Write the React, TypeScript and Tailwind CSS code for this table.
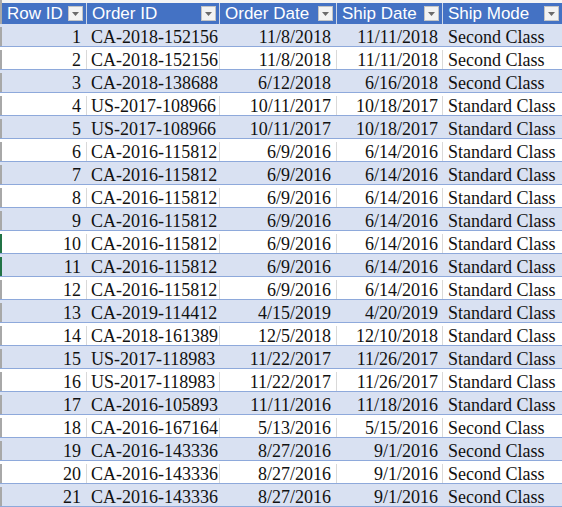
import React from "react";

type Row = [number, string, string, string, string];

const rows: Row[] = [
  [1, "CA-2018-152156", "11/8/2018", "11/11/2018", "Second Class"],
  [2, "CA-2018-152156", "11/8/2018", "11/11/2018", "Second Class"],
  [3, "CA-2018-138688", "6/12/2018", "6/16/2018", "Second Class"],
  [4, "US-2017-108966", "10/11/2017", "10/18/2017", "Standard Class"],
  [5, "US-2017-108966", "10/11/2017", "10/18/2017", "Standard Class"],
  [6, "CA-2016-115812", "6/9/2016", "6/14/2016", "Standard Class"],
  [7, "CA-2016-115812", "6/9/2016", "6/14/2016", "Standard Class"],
  [8, "CA-2016-115812", "6/9/2016", "6/14/2016", "Standard Class"],
  [9, "CA-2016-115812", "6/9/2016", "6/14/2016", "Standard Class"],
  [10, "CA-2016-115812", "6/9/2016", "6/14/2016", "Standard Class"],
  [11, "CA-2016-115812", "6/9/2016", "6/14/2016", "Standard Class"],
  [12, "CA-2016-115812", "6/9/2016", "6/14/2016", "Standard Class"],
  [13, "CA-2019-114412", "4/15/2019", "4/20/2019", "Standard Class"],
  [14, "CA-2018-161389", "12/5/2018", "12/10/2018", "Standard Class"],
  [15, "US-2017-118983", "11/22/2017", "11/26/2017", "Standard Class"],
  [16, "US-2017-118983", "11/22/2017", "11/26/2017", "Standard Class"],
  [17, "CA-2016-105893", "11/11/2016", "11/18/2016", "Standard Class"],
  [18, "CA-2016-167164", "5/13/2016", "5/15/2016", "Second Class"],
  [19, "CA-2016-143336", "8/27/2016", "9/1/2016", "Second Class"],
  [20, "CA-2016-143336", "8/27/2016", "9/1/2016", "Second Class"],
  [21, "CA-2016-143336", "8/27/2016", "9/1/2016", "Second Class"],
];

const headers = ["Row ID", "Order ID", "Order Date", "Ship Date", "Ship Mode"];

function Dropdown() {
  return (
    <div className="w-[15px] h-[15px] shrink-0 bg-[#f3f3f3] border border-[#c4c4c4] flex items-center justify-center">
      <svg width="7" height="4" viewBox="0 0 7 4">
        <polygon points="0,0 7,0 3.5,4" fill="#6b6b6b" />
      </svg>
    </div>
  );
}

export default function App() {
  return (
    <div className="w-[562px] h-[507px] overflow-hidden bg-white">
      <div className="h-[3px] bg-[#f4f4f4] border-l-2 border-[#a8a8a8]" />
      <div className="grid grid-cols-[87px_133px_117px_106px_119px] h-[21px] font-['Liberation_Sans']">
        {headers.map((h, i) => (
          <div
            key={h}
            className={`flex items-center justify-between bg-[#4472c4] text-white pl-[5px] pr-[3px] text-[17px] leading-none border-r border-[#d0d8e8] ${
              i === 0 ? "border-l-2 border-l-[#a8a8a8]" : ""
            } ${i === 4 ? "pr-[2px] border-r-0" : ""}`}
          >
            <span className="whitespace-nowrap">{h}</span>
            <Dropdown />
          </div>
        ))}
      </div>
      <div className="font-['Liberation_Serif']">
        {rows.map((r, idx) => {
          const band = idx % 2 === 0;
          const bg = band ? "bg-[#d9e1f2]" : "bg-white";
          const vline = band ? "border-r-[#d9e1f2]" : "border-r-[#d9d9d9]";
          const green = r[0] === 10 || r[0] === 11;
          return (
            <div
              key={r[0]}
              className={`grid grid-cols-[87px_133px_117px_106px_119px] h-[23px] pt-[3px] border-b border-[#8ea9db] text-[18px] leading-none text-[#111] ${bg}`}
            >
              <div
                className={`flex items-center justify-end pr-[5px] border-r ${vline} border-l-2 ${
                  green ? "border-l-[#217346]" : "border-l-[#a8a8a8]"
                }`}
              >
                {r[0]}
              </div>
              <div className={`flex items-center pl-[4px] border-r ${vline} whitespace-nowrap`}>{r[1]}</div>
              <div className={`flex items-center justify-end pr-[5px] border-r ${vline} whitespace-nowrap`}>{r[2]}</div>
              <div className={`flex items-center justify-end pr-[4px] border-r ${vline} whitespace-nowrap`}>{r[3]}</div>
              <div className="flex items-center pl-[5px] whitespace-nowrap">{r[4]}</div>
            </div>
          );
        })}
      </div>
    </div>
  );
}
